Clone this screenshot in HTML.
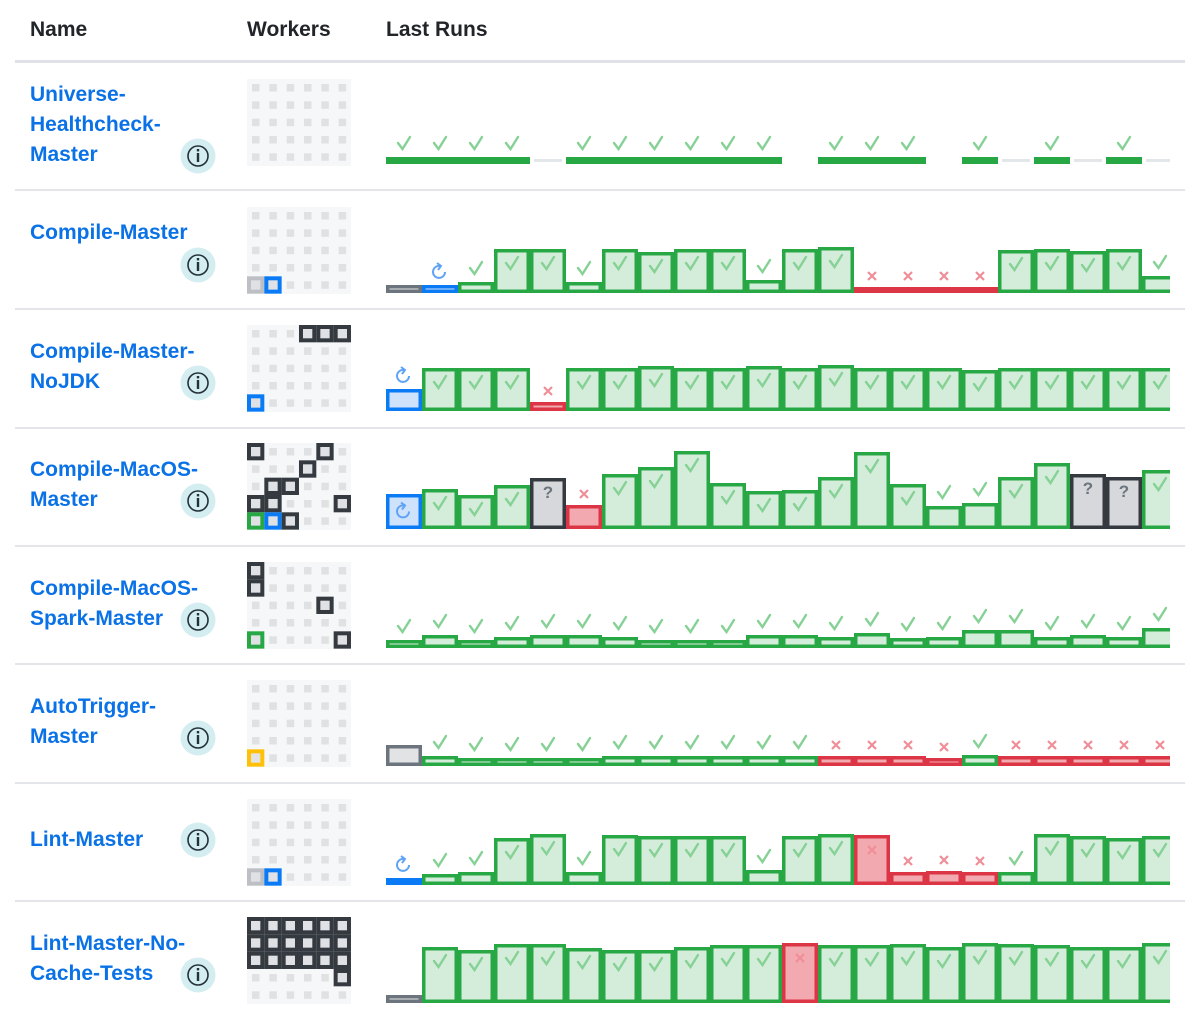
<!DOCTYPE html>
<html><head><meta charset="utf-8">
<style>
body{margin:0;width:1200px;height:1015px;background:#fff;font-family:"Liberation Sans",Arial,sans-serif;overflow:hidden;position:relative}
.h{position:absolute;top:18px;font-weight:bold;font-size:21px;color:#212529}
.n{position:absolute;left:30px;font-weight:bold;font-size:21px;line-height:30px;color:#0a72e6}
svg{position:absolute;left:0;top:0}
</style></head><body>
<div class="h" style="left:30px">Name</div>
<div class="h" style="left:247px">Workers</div>
<div class="h" style="left:386px">Last Runs</div>
<div class="n" style="top:80px">Universe-<br>Healthcheck-<br>Master</div>
<div class="n" style="top:218px">Compile-Master</div>
<div class="n" style="top:337px">Compile-Master-<br>NoJDK</div>
<div class="n" style="top:455px">Compile-MacOS-<br>Master</div>
<div class="n" style="top:574px">Compile-MacOS-<br>Spark-Master</div>
<div class="n" style="top:692px">AutoTrigger-<br>Master</div>
<div class="n" style="top:825px">Lint-Master</div>
<div class="n" style="top:929px">Lint-Master-No-<br>Cache-Tests</div>
<svg id="s" width="1200" height="1015" xmlns="http://www.w3.org/2000/svg">
<defs><clipPath id="c"><rect x="380" y="0" width="790" height="1015"/></clipPath></defs>
<rect x="15" y="60" width="1170" height="3" fill="#dee2e6"/>
<g id="sep" fill="#e3e5e8"></g>
<g id="info"></g>
<g id="grid"></g>
<g id="bars" clip-path="url(#c)"></g>
</svg>
<script>
var NS="http://www.w3.org/2000/svg";
function el(p,t,a){var e=document.createElementNS(NS,t);for(var k in a)e.setAttribute(k,a[k]);p.appendChild(e);return e;}
var sep=document.getElementById('sep');
[189,308,427,545,663,782,900].forEach(function(y){el(sep,'rect',{x:15,y:y,width:1170,height:2});});
var info=document.getElementById('info');
[156,265,383,501,620,738,840,975].forEach(function(y){
 el(info,'circle',{cx:198,cy:y,r:17.5,fill:'#d3edf1'});
 el(info,'circle',{cx:198,cy:y,r:10,fill:'none',stroke:'#24303a','stroke-width':1.6});
 el(info,'rect',{x:196.8,y:y-3,width:2.4,height:9,fill:'#24303a'});
 el(info,'rect',{x:196.8,y:y-7,width:2.4,height:2.4,fill:'#24303a'});
});
var C={g:['#28a745','#d4edda'],r:['#dc3545','#f2a9b0'],b:['#0a7bf5','#cfe2fb'],k:['#343a40','#d6d8db'],s:['#6c757d','#e2e3e5'],a:['#bcbfc3','#e9ecef'],y:['#ffc107','#fff3cd']};
var grid=document.getElementById('grid');
var G=[
 [79,[]],
 [207,[[0,4,'a'],[1,4,'b']]],
 [325,[[3,0,'k'],[4,0,'k'],[5,0,'k'],[0,4,'b']]],
 [443,[[0,0,'k'],[4,0,'k'],[3,1,'k'],[1,2,'k'],[2,2,'k'],[0,3,'k'],[1,3,'k'],[5,3,'k'],[0,4,'g'],[1,4,'b'],[2,4,'k']]],
 [562,[[0,0,'k'],[0,1,'k'],[4,2,'k'],[0,4,'g'],[5,4,'k']]],
 [680,[[0,4,'y']]],
 [799,[[0,4,'a'],[1,4,'b']]],
 [917,(function(){var a=[];for(var r=0;r<3;r++)for(var c=0;c<6;c++)a.push([c,r,'k']);a.push([5,3,'k']);return a;})()]
];
var cw=17.33;
G.forEach(function(g){
 var top=g[0];
 el(grid,'rect',{x:247,y:top,width:104,height:87,fill:'#f6f7f8'});
 for(var r=0;r<5;r++)for(var c=0;c<6;c++){
  el(grid,'rect',{x:247+c*cw+5,y:top+r*cw+5,width:7.5,height:7.5,fill:'#e0e1e3'});
 }
 g[1].forEach(function(h){
  var x=247+h[0]*cw,y=top+h[1]*cw,col=C[h[2]];
  el(grid,'rect',{x:x+2,y:y+2,width:cw-4,height:cw-4,fill:h[2]=='y'?'#e2e3e5':'#dfe1e4',stroke:col[0],'stroke-width':4});
 });
});
var bars=document.getElementById('bars');
function check(x,y){el(bars,'path',{d:'M'+(x-6)+','+(y-1)+' L'+(x-1.5)+','+(y+5)+' L'+(x+6)+','+(y-7),fill:'none',stroke:'#86d195','stroke-width':2.4,'stroke-linecap':'round'});}
function cross(x,y){el(bars,'path',{d:'M'+(x-4)+','+(y-4)+' L'+(x+4)+','+(y+4)+' M'+(x+4)+','+(y-4)+' L'+(x-4)+','+(y+4),stroke:'#f08e98','stroke-width':2.2,fill:'none'});}
function refresh(x,y){el(bars,'path',{d:'M'+(x+5)+','+(y)+' A6,6 0 1 1 '+(x)+','+(y-6),fill:'none',stroke:'#5ea3f5','stroke-width':2});el(bars,'path',{d:'M'+(x-3)+','+(y-9)+' L'+(x+1)+','+(y-6)+' L'+(x-2)+','+(y-2),fill:'none',stroke:'#5ea3f5','stroke-width':2});}
function qm(x,y){var t=el(bars,'text',{x:x,y:y+6,'text-anchor':'middle','font-size':17,'font-weight':'bold',fill:'#6c757d','font-family':'Liberation Sans,sans-serif'});t.textContent='?';}
var R=[
 [164,'g7 g7 g7 g7 n3 g7 g7 g7 g7 g7 g7 w0 g7 g7 g7 w0 g7 n3 g7 n3 g7 n3'],
 [293,'s8 b8 g11 g44 g44 g11 g44 g41 g44 g44 g13 g44 g46 r6 r6 r6 r6 g43 g44 g42 g44 g17'],
 [411,'b22 g43 g43 g43 r9 g43 g43 g45 g43 g43 g45 g43 g46 g43 g43 g43 g41 g43 g43 g43 g43 g43'],
 [529,'B35 g40 g34 g44 k51 r24 g55 g62 g78 g46 g38 g39 g52 g77 g45 g23 g26 g52 g66 k55 k52 g59'],
 [648,'g8 g13 g8 g11 g13 g13 g11 g8 g8 g8 g13 g13 g11 g15 g10 g11 g18 g18 g11 g13 g11 g20'],
 [766,'S21 g10 g8 g8 g8 g8 g10 g10 g10 g10 g10 g10 r10 r10 r10 r8 g11 r10 r10 r10 r10 r10'],
 [885,'b7 g11 g13 g47 g51 g13 g50 g49 g49 g49 g15 g49 g51 r50 r13 r14 r13 g13 g51 g49 g47 g49'],
 [1003,'s8 g56 g53 g59 g59 g55 g53 g53 g56 g58 g58 r60 g58 g58 g59 g56 g60 g59 g58 g56 g56 g60']
];
R.forEach(function(row,ri){
 var base=row[0];
 row[1].split(' ').forEach(function(tok,i){
  var t=tok[0],h=+tok.slice(1),x=386+36*i,cx=x+18;
  if(t=='w')return;
  if(t=='n'){el(bars,'rect',{x:x+4,y:base-h-2,width:28,height:h,fill:'#e4e7ea'});return;}
  var noIcon=(t=='S'),icIn=(t=='B');
  if(t=='B')t='b';if(t=='S')t='s';
  var col=C[t];
  if(ri==0){el(bars,'rect',{x:x,y:base-h,width:36,height:h,fill:col[0]});check(cx,base-h-13);return;}
  el(bars,'rect',{x:x+1.75,y:base-h+1.75,width:32.5,height:Math.max(h-3.5,0.5),fill:col[1],stroke:col[0],'stroke-width':3.5});
  if(noIcon)return;
  var inside=h>=30||icIn;
  var iy=inside?base-h+15:base-h-13;
  if(t=='g')check(cx,iy);
  else if(t=='r')cross(cx,inside?iy:iy+2);
  else if(t=='b')refresh(cx,inside?base-h/2:iy);
  else if(t=='k')qm(cx,base-h+14);
 });
});
</script>
</body></html>
